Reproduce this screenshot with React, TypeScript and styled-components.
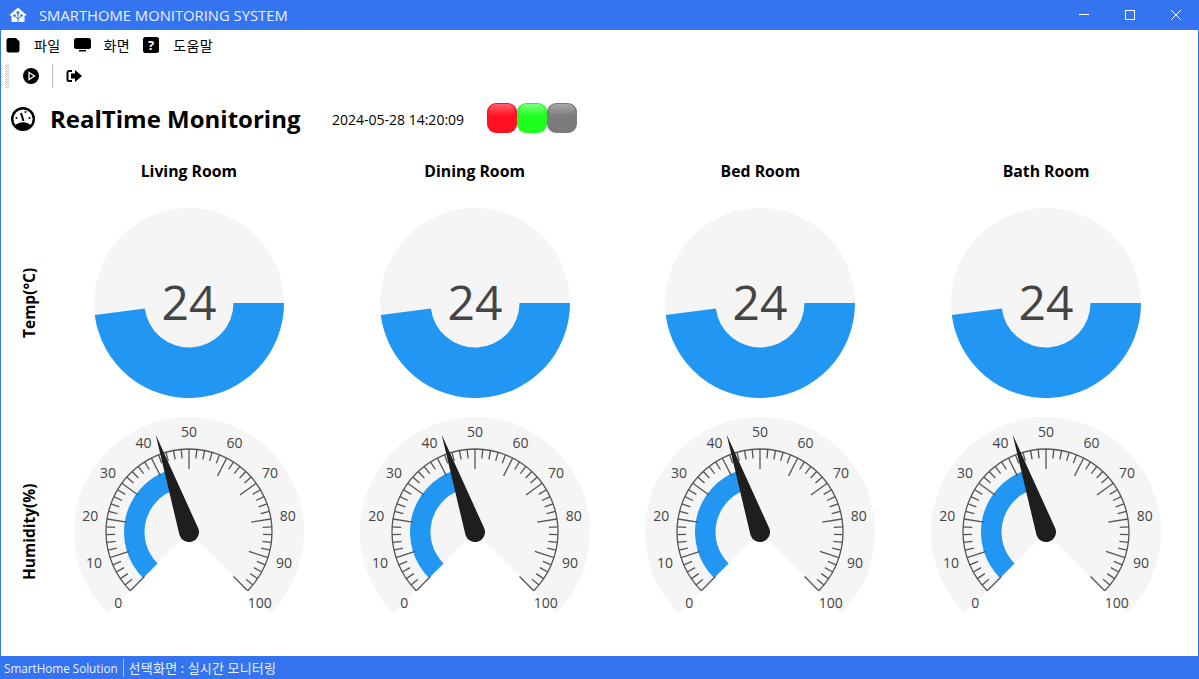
import { ReactElement } from 'react';
import styled, { createGlobalStyle } from 'styled-components';

const GlobalStyle = createGlobalStyle`
  html, body {
    margin: 0;
    padding: 0;
    height: 100%;
    background: #fff;
  }
  #root {
    height: 100%;
  }
`;

const BLUE = '#3574f0';
const FONT = '"Open Sans", "Noto Sans CJK KR", sans-serif';
const KR_FONT = '"Noto Sans CJK KR", "Noto Sans", sans-serif';

const Window = styled.div`
  width: 1199px;
  height: 679px;
  box-sizing: border-box;
  border: 1px solid ${BLUE};
  border-top: 0;
  border-bottom: 0;
  display: flex;
  flex-direction: column;
  overflow: hidden;
  color: #000;
  font-family: ${FONT};
`;

const TitleBar = styled.header`
  height: 30px;
  margin: 0 -1px;
  flex: none;
  display: flex;
  align-items: center;
  background: ${BLUE};
  color: #e8f0ff;
  padding-left: 9px;
`;

const TitleText = styled.span`
  margin-left: 12px;
  font-size: 14.8px;
`;

const WindowButtons = styled.div`
  margin-left: auto;
  display: flex;
`;

const WindowButton = styled.div`
  width: 46px;
  height: 30px;
  display: flex;
  align-items: center;
  justify-content: center;
`;

const MenuBar = styled.nav`
  height: 30px;
  flex: none;
  display: flex;
  align-items: center;
  padding-left: 5px;
`;

const MenuItem = styled.div`
  display: flex;
  align-items: center;
  margin-right: 13px;
`;

const MenuIcon = styled.div<{ $width: number }>`
  width: ${({ $width }) => $width}px;
  height: 16px;
  display: flex;
`;

const HelpBadge = styled.div`
  width: 16px;
  height: 16px;
  border-radius: 2.5px;
  background: #000;
  color: #fff;
  font-size: 13px;
  font-weight: 700;
  line-height: 16px;
  text-align: center;
`;

const MenuLabel = styled.span`
  margin-left: 13px;
  font-family: ${KR_FONT};
  font-size: 14px;
  letter-spacing: 0.4px;
`;

const ToolBar = styled.div`
  height: 32px;
  flex: none;
  display: flex;
  align-items: center;
  padding-left: 4px;
`;

const Grip = styled.div`
  width: 4px;
  height: 24px;
  background-image: repeating-conic-gradient(#c8c8c8 0 25%, #fff 0 50%);
  background-size: 2px 2px;
`;

const ToolButton = styled.div`
  width: 16px;
  height: 16px;
  display: flex;
  margin-left: 14px;
  margin-right: 14px;
`;

const ToolDivider = styled.div`
  width: 1px;
  height: 24px;
  background: #b9c0c9;
  margin-left: -1px;
  margin-right: -1px;
`;

const HeaderRow = styled.div`
  height: 54px;
  flex: none;
  display: flex;
  align-items: center;
  padding-left: 10px;
`;

const PageTitle = styled.h1`
  margin: 0 0 0 15px;
  font-size: 24px;
  line-height: 34px;
  font-weight: 700;
  width: 282px;
  white-space: nowrap;
`;

const Clock = styled.span`
  font-size: 14px;
  width: 155px;
`;

const Lamps = styled.div`
  display: flex;
  margin-top: -2px;
`;

const Lamp = styled.div<{ $color: string; $shine: string }>`
  width: 30px;
  height: 30px;
  box-sizing: border-box;
  border-radius: 9px;
  background: ${({ $color }) => $color};
  overflow: hidden;
  &::before {
    content: '';
    display: block;
    height: 12px;
    margin: 1px 2px 0;
    border-radius: 7px 7px 3px 3px;
    background: linear-gradient(${({ $shine }) => $shine}, ${({ $color }) => $color});
  }
`;

const Board = styled.main`
  display: grid;
  grid-template-columns: 45px repeat(4, 285.75px);
  grid-template-rows: 29px 190px 230px;
  row-gap: 19px;
  padding-top: 14px;
  flex: none;
`;

const RoomName = styled.div`
  display: flex;
  align-items: center;
  justify-content: center;
  font-size: 15.8px;
  font-weight: 700;
  line-height: 22px;
  height: 22px;
  white-space: nowrap;
`;

const RowName = styled.div`
  writing-mode: vertical-rl;
  transform: rotate(180deg);
  display: flex;
  align-items: center;
  justify-content: center;
  font-size: 15.5px;
  font-weight: 700;
  white-space: nowrap;
  padding-right: 11px;
`;

const GaugeCell = styled.div`
  display: flex;
  align-items: flex-start;
  justify-content: center;
`;

const StatusBar = styled.footer`
  margin: auto -1px 0;
  height: 23px;
  flex: none;
  display: flex;
  align-items: center;
  background: ${BLUE};
  color: #e8f0ff;
  font-size: 11.7px;
  padding-left: 4px;
`;

const StatusDivider = styled.div`
  width: 1px;
  height: 18px;
  background: #a9c4f7;
  margin: 0 5px;
`;

const StatusKr = styled.span`
  font-family: ${KR_FONT};
  font-size: 13px;
  letter-spacing: 0.25px;
`;

const polar = (cx: number, cy: number, r: number, deg: number): [number, number] => {
  const a = ((deg - 90) * Math.PI) / 180;
  return [cx + r * Math.cos(a), cy + r * Math.sin(a)];
};

const bandPath = (cx: number, cy: number, outer: number, inner: number, from: number, to: number): string => {
  const large = to - from > 180 ? 1 : 0;
  const [ax, ay] = polar(cx, cy, outer, from);
  const [bx, by] = polar(cx, cy, outer, to);
  const [dx, dy] = polar(cx, cy, inner, to);
  const [ex, ey] = polar(cx, cy, inner, from);
  return `M${ax} ${ay}A${outer} ${outer} 0 ${large} 1 ${bx} ${by}L${dx} ${dy}A${inner} ${inner} 0 ${large} 0 ${ex} ${ey}Z`;
};

const DonutGauge = ({ value }: { value: number }): ReactElement => {
  const sweep = (value / 50) * 360;
  return (
    <svg width="190" height="190" viewBox="0 0 190 190">
      <circle cx="95" cy="95" r="95" fill="#f5f5f5" />
      <path d={bandPath(95, 95, 95, 44.5, 90, 90 + sweep)} fill="#2196f3" />
      <text x="95" y="112" textAnchor="middle" fontFamily={FONT} fontSize="48" fill="#444">
        {value}
      </text>
    </svg>
  );
};

const SCALE_START = -135;
const SCALE_SWEEP = 270;
const ticks = Array.from({ length: 51 }, (_, i) => i * 2);
const labels = Array.from({ length: 11 }, (_, i) => i * 10);

const DialGauge = ({ value }: { value: number }): ReactElement => {
  const cx = 115;
  const cy = 115;
  const angle = (v: number) => SCALE_START + (v / 100) * SCALE_SWEEP;
  const needle = angle(value);
  const [tipX, tipY] = polar(cx, cy, 103, needle);
  const [b1x, b1y] = polar(cx, cy, 10, needle - 90);
  const [b2x, b2y] = polar(cx, cy, 10, needle + 90);

  return (
    <svg width="230" height="200" viewBox="0 0 230 200">
      <path
        d={`M${cx} ${cy}L${polar(cx, cy, 115, -135).join(' ')}A115 115 0 1 1 ${polar(cx, cy, 115, 135).join(' ')}Z`}
        fill="#f5f5f5"
      />
      <path d={bandPath(cx, cy, 65, 44.5, -135, needle)} fill="#2196f3" />
      <path
        d={`M${polar(cx, cy, 83, -135).join(' ')}A83 83 0 1 1 ${polar(cx, cy, 83, 135).join(' ')}`}
        fill="none"
        stroke="#555"
        strokeWidth="1.3"
      />
      {ticks.map((v) => {
        const major = v % 10 === 0;
        const [x1, y1] = polar(cx, cy, 83, angle(v));
        const [x2, y2] = polar(cx, cy, major ? 63 : 74, angle(v));
        return <line key={v} x1={x1} y1={y1} x2={x2} y2={y2} stroke="#555" strokeWidth="1.3" />;
      })}
      {labels.map((v) => {
        const [x, y] = polar(cx, cy, 100, angle(v));
        return (
          <text key={v} x={x} y={y + 5} textAnchor="middle" fontFamily={FONT} fontSize="14" fill="#444">
            {v}
          </text>
        );
      })}
      <path d={`M${tipX} ${tipY}L${b2x} ${b2y}A10 10 0 0 1 ${b1x} ${b1y}Z`} fill="#1e1e1e" />
    </svg>
  );
};

const HomeLogo = (): ReactElement => (
  <svg width="18" height="18" viewBox="0 0 18 18">
    <path d="M9 1.5 L18 9.5 L15.5 9.5 L15.5 16 L2.5 16 L2.5 9.5 L0 9.5 Z" fill="#fff" />
    <path d="M9 7V16M5.5 10L9 13M12.5 10L9 13" stroke={BLUE} strokeWidth="1" fill="none" />
    <circle cx="9" cy="6.5" r="1.5" fill={BLUE} />
    <circle cx="5.5" cy="9.5" r="1.3" fill={BLUE} />
    <circle cx="12.5" cy="9.5" r="1.3" fill={BLUE} />
  </svg>
);

const FileIcon = (): ReactElement => (
  <svg width="14" height="16" viewBox="0 0 14 16">
    <path d="M3 1H10L13.5 4.5V13A2.5 2.5 0 0 1 11 15.5H3A2.5 2.5 0 0 1 .5 13V3.5A2.5 2.5 0 0 1 3 1Z" fill="#000" />
  </svg>
);

const MonitorIcon = (): ReactElement => (
  <svg width="17" height="16" viewBox="0 0 17 16">
    <rect x="0" y="1" width="17" height="11" rx="2.5" fill="#000" />
    <rect x="5" y="13" width="7" height="1.5" fill="#000" />
  </svg>
);

const DashIcon = (): ReactElement => (
  <svg width="24" height="24" viewBox="0 0 24 24">
    <circle cx="12" cy="12" r="10.8" fill="none" stroke="#000" strokeWidth="2.4" />
    <path d="M4 19 C7 14 17 14 20 19 L17 22.5 H7 Z" fill="#000" />
    <path d="M12.5 14 L10 6" stroke="#000" strokeWidth="2" />
    <circle cx="5.5" cy="11" r="1" />
    <circle cx="14.5" cy="5" r="1" />
    <circle cx="18.5" cy="11" r="1" />
  </svg>
);

const PlayIcon = (): ReactElement => (
  <svg width="16" height="16" viewBox="0 0 16 16">
    <circle cx="8" cy="8" r="8" fill="#000" />
    <path d="M6 4.5 L11.5 8 L6 11.5 Z" fill="none" stroke="#fff" strokeWidth="1.3" />
  </svg>
);

const ExitIcon = (): ReactElement => (
  <svg width="16" height="16" viewBox="0 0 16 16">
    <path d="M6 3H3A1.5 1.5 0 0 0 1.5 4.5v7A1.5 1.5 0 0 0 3 13H6" fill="none" stroke="#000" strokeWidth="2" />
    <path d="M9 2 L16 8 L9 14 V10.5 H5 V5.5 H9 Z" fill="#000" />
  </svg>
);

const rooms = ['Living Room', 'Dining Room', 'Bed Room', 'Bath Room'];

export default function App(): ReactElement {
  return (
    <Window>
      <GlobalStyle />
      <TitleBar>
        <HomeLogo />
        <TitleText>SMARTHOME MONITORING SYSTEM</TitleText>
        <WindowButtons>
          <WindowButton>
            <svg width="10" height="10"><path d="M0 4.5H10" stroke="#fff" /></svg>
          </WindowButton>
          <WindowButton>
            <svg width="10" height="10"><rect x=".5" y=".5" width="9" height="9" fill="none" stroke="#fff" /></svg>
          </WindowButton>
          <WindowButton>
            <svg width="10" height="10"><path d="M0 0L10 10M10 0L0 10" stroke="#fff" /></svg>
          </WindowButton>
        </WindowButtons>
      </TitleBar>
      <MenuBar>
        <MenuItem>
          <MenuIcon $width={15}><FileIcon /></MenuIcon>
          <MenuLabel>파일</MenuLabel>
        </MenuItem>
        <MenuItem>
          <MenuIcon $width={17}><MonitorIcon /></MenuIcon>
          <MenuLabel>화면</MenuLabel>
        </MenuItem>
        <MenuItem>
          <MenuIcon $width={17}><HelpBadge>?</HelpBadge></MenuIcon>
          <MenuLabel>도움말</MenuLabel>
        </MenuItem>
      </MenuBar>
      <ToolBar>
        <Grip />
        <ToolButton><PlayIcon /></ToolButton>
        <ToolDivider />
        <ToolButton><ExitIcon /></ToolButton>
      </ToolBar>
      <HeaderRow>
        <DashIcon />
        <PageTitle>RealTime Monitoring</PageTitle>
        <Clock>2024-05-28 14:20:09</Clock>
        <Lamps>
          <Lamp $color="#ff1022" $shine="#ff6070" />
          <Lamp $color="#1fff1f" $shine="#80ff80" />
          <Lamp $color="#7b7b7b" $shine="#a8a8a8" />
        </Lamps>
      </HeaderRow>
      <Board>
        <div />
        {rooms.map((room) => <RoomName key={room}>{room}</RoomName>)}
        <RowName>Temp(°C)</RowName>
        {rooms.map((room) => <GaugeCell key={room}><DonutGauge value={24} /></GaugeCell>)}
        <RowName>Humidity(%)</RowName>
        {rooms.map((room) => <GaugeCell key={room}><DialGauge value={43} /></GaugeCell>)}
      </Board>
      <StatusBar>
        SmartHome Solution
        <StatusDivider />
        <StatusKr>선택화면 : 실시간 모니터링</StatusKr>
      </StatusBar>
    </Window>
  );
}
